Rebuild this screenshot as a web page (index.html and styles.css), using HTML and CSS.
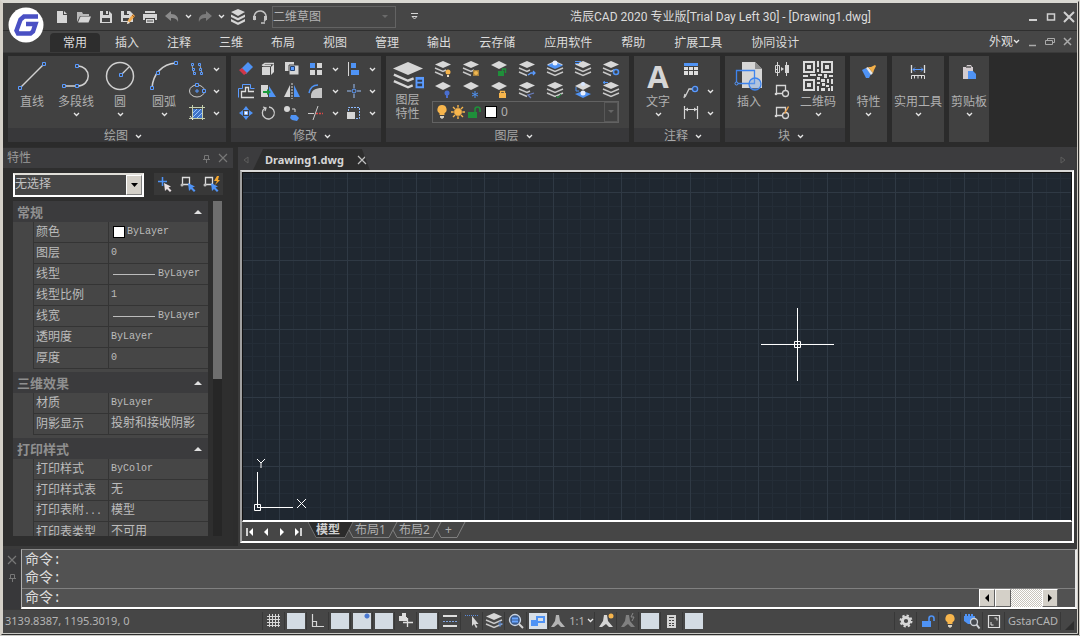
FILE: index.html
```
<!DOCTYPE html>
<html lang="zh-CN">
<head>
  <meta charset="UTF-8" />
  <title>浩辰CAD 2020 专业版</title>
  <link rel="stylesheet" href="styles.css">
</head>
<body>

<!-- icon sprite -->
<svg class="sprite" aria-hidden="true">
  <symbol id="i-chev" viewBox="0 0 7 5"><path d="M1 1l2.5 2.5L6 1" fill="none" stroke="#e6e6e6" stroke-width="1.3"/></symbol>
  <symbol id="i-new" viewBox="0 0 16 16"><path d="M3 2h6v4h4v8H3z" fill="#d6d6d6"/><path d="M10 2l3 3h-3z" fill="#d6d6d6"/></symbol>
  <symbol id="i-open" viewBox="0 0 16 16"><path d="M1 13V3h5l1 2h6v2H4z" fill="#b9b9b9"/><path d="M4.500 7.500H15L12.500 13.500H2z" fill="#d6d6d6"/></symbol>
  <symbol id="i-save" viewBox="0 0 16 16"><path d="M2 2h9l3 3v9H2z" fill="#d6d6d6"/><path d="M5 2h6v4H5zM4 9h8v4H4z" fill="#444"/><path d="M8 2h2v3H8z" fill="#d6d6d6"/></symbol>
  <symbol id="i-saveas" viewBox="0 0 16 16"><path d="M1 2h9l3 3v8H1z" fill="#d6d6d6"/><path d="M4 2h5v4H4zM3 9h6v3H3z" fill="#444"/><path d="M7 2h2v3H7z" fill="#d6d6d6"/><path d="M7 15l1-4 5-6 2 2-5 6z" fill="#f3a94a"/><path d="M7 15l1-3 2 2z" fill="#e8e8e8"/><path d="M12 6l2 2" stroke="#a35b21"/></symbol>
  <symbol id="i-print" viewBox="0 0 16 16"><path d="M3 2h10v2H3zM1 5h14v6h-2V9H3v2H1zM4 10h8v4H4z" fill="#d6d6d6"/><path d="M5 12h6" stroke="#444"/></symbol>
  <symbol id="i-undo" viewBox="0 0 16 16"><path d="M1 7l6-5v3c5 0 8 3 7 8-1-3-3-4-7-4v3z" fill="#8b8b8b"/></symbol>
  <symbol id="i-redo" viewBox="0 0 16 16"><path d="M15 7L9 2v3C4 5 1 8 2 13c1-3 3-4 7-4v3z" fill="#7b7b7b"/></symbol>
  <symbol id="i-stack" viewBox="0 0 16 16"><path d="M8 0l7 3-7 4-7-4zM1 5.500l7 3.500 7-3.500V8l-7 3.500L1 8zM1 10l7 3.500 7-3.500v2.500L8 16l-7-3.500z" fill="#d6d6d6"/></symbol>
  <symbol id="i-head" viewBox="0 0 16 16"><path d="M3 11a6 6 0 1 1 9 1.500M9 14h4" fill="none" stroke="#c4c4c4" stroke-width="1.500"/><path d="M1 7h3v4H1zM12 7h3v4h-3z" fill="#c4c4c4"/></symbol>

  <symbol id="i-line" viewBox="0 0 32 32"><path d="M4 28L28 4" stroke="#d0d0d0" stroke-width="1.500"/><path d="M2.500 26.500h3v3h-3zM26.500 2.500h3v3h-3z" fill="#414141" stroke="#5a9bff"/></symbol>
  <symbol id="i-pline" viewBox="0 0 32 32"><path d="M4 26h13c15 0 15-20 0-20" fill="none" stroke="#d0d0d0" stroke-width="1.500"/><path d="M2.500 24.500h3v3h-3zM15.500 24.500h3v3h-3zM15.500 4.500h3v3h-3z" fill="#414141" stroke="#5a9bff"/></symbol>
  <symbol id="i-circle" viewBox="0 0 32 32"><circle cx="16" cy="16" r="13.500" fill="none" stroke="#d0d0d0" stroke-width="1.500"/><path d="M17 15l8-8" stroke="#d0d0d0" stroke-width="1.300"/><path d="M15.500 13.500h3v3h-3z" fill="#414141" stroke="#5a9bff"/></symbol>
  <symbol id="i-arc" viewBox="0 0 32 32"><path d="M4 28C5 14 14 4 28 3" fill="none" stroke="#d0d0d0" stroke-width="1.500"/><path d="M2.500 26.500h3v3h-3zM8.500 11.500h3v3h-3zM26.500 1.500h3v3h-3z" fill="#414141" stroke="#5a9bff"/></symbol>
  <symbol id="i-array" viewBox="0 0 18 18"><path d="M4 5l2 9M12 5l2 9" stroke="#aaa"/><path d="M3.500 3.500h2v2h-2zM4.500 8.500h2v2h-2zM5.500 12.500h2v2h-2zM10.500 3.500h2v2h-2zM11.500 8.500h2v2h-2zM12.500 12.500h2v2h-2z" fill="#414141" stroke="#5a9bff"/></symbol>
  <symbol id="i-ellipse" viewBox="0 0 18 18"><ellipse cx="9" cy="9" rx="7.500" ry="6" fill="none" stroke="#ccc"/><path d="M9 7v4M7 9h4" stroke="#5a9bff"/><path d="M7.500 1.500h3v3h-3zM14.500 7.500h3v3h-3z" fill="#414141" stroke="#5a9bff"/></symbol>
  <symbol id="i-hatch" viewBox="0 0 18 18"><path d="M5 5h9v9H5z" fill="#3f74c8"/><path d="M5 9l4-4M5 13l8-8M9 14l5-5" stroke="#9cc3ff"/><path d="M4.500 1v15M14.500 1v15M1 3.500h16M1 14.500h16" stroke="#c5cfae"/><path d="M2 12l3 4" stroke="#eee"/></symbol>

  <symbol id="i-erase" viewBox="0 0 18 18"><path d="M11 2l5 5-7 7-5-5z" fill="#4f93f5"/><path d="M5 8l5 5-3 2-5-5z" fill="#cf3648"/></symbol>
  <symbol id="i-copy" viewBox="0 0 18 18"><path d="M3 7h8v8H3z" fill="#d6d6d6"/><path d="M3 5.500l3-2h9M4 5.500h8" fill="none" stroke="#d6d6d6" stroke-width="1.500"/><path d="M12 7l3-3v8l-3 3z" fill="#d6d6d6"/></symbol>
  <symbol id="i-overlap" viewBox="0 0 18 18"><path d="M2 2h9v9H2z" fill="#d6d6d6"/><path d="M6 5h10v10H6z" fill="#d6d6d6" stroke="#414141"/><path d="M7.500 6.500h4v4h-4z" fill="#5a9bff" stroke="#26426e"/></symbol>
  <symbol id="i-four" viewBox="0 0 18 18"><path d="M3 3h5v5H3z" fill="#4f93f5"/><path d="M10 3h5v5h-5zM3 10h5v5H3zM10 10h5v5h-5z" fill="#d6d6d6"/></symbol>
  <symbol id="i-align" viewBox="0 0 18 18"><path d="M3.500 2v14" stroke="#d6d6d6"/><path d="M6 3h5v5H6zM6 10h8v5H6z" fill="#4f93f5"/></symbol>
  <symbol id="i-offset" viewBox="0 0 18 18"><path d="M1.500 15.500v-9h4v-4h8v4h4" fill="none" stroke="#5a9bff"/><path d="M17 15.500H4.500v-6h4v-4h3v4H17" fill="none" stroke="#ddd" stroke-width="1.300"/></symbol>
  <symbol id="i-stretch" viewBox="0 0 18 18"><path d="M2 3h7v12H2z" fill="#d6d6d6"/><path d="M10 4l7 11h-7z" fill="#4f93f5"/><path d="M4 9h4V7l4 3-4 3v-2H4z" fill="#1a9a3c"/></symbol>
  <symbol id="i-mirror" viewBox="0 0 18 18"><path d="M7 3v12H1z" fill="#d6d6d6"/><path d="M11 3v12h6z" fill="#4f93f5"/><path d="M9 1v16" stroke="#ddd" stroke-dasharray="2 1"/></symbol>
  <symbol id="i-fillet" viewBox="0 0 18 18"><path d="M4 16V13c1-5 4-7 11-7v10z" fill="#c6c6c6"/><path d="M2 11c1-5 4-8 9-8" fill="none" stroke="#4f93f5" stroke-width="1.500"/></symbol>
  <symbol id="i-join" viewBox="0 0 18 18"><path d="M9 2v14M2 9h14" stroke="#9cc0f5" stroke-dasharray="4 1"/><circle cx="9" cy="9" r="2" fill="#414141" stroke="#5a9bff"/></symbol>
  <symbol id="i-move" viewBox="0 0 18 18"><path d="M9 2l3 4H6zM9 16l3-4H6zM2 9l4-3v6zM16 9l-4-3v6z" fill="#4f93f5"/><path d="M7.500 7.500h3v3h-3z" fill="#fff" stroke="#8db9ff"/></symbol>
  <symbol id="i-rotate" viewBox="0 0 18 18"><path d="M6 4a6 6 0 1 0 4-1M4 3l3 1-1 3" fill="none" stroke="#ccc" stroke-width="1.300"/></symbol>
  <symbol id="i-cprop" viewBox="0 0 18 18"><circle cx="4" cy="5" r="3" fill="#d6d6d6"/><path d="M9 5h3v3" fill="none" stroke="#d6d6d6"/><path d="M8 11h5l3 3-2 3-5-1-2-2z" fill="#4f93f5"/></symbol>
  <symbol id="i-trim" viewBox="0 0 18 18"><path d="M11 2L6 16M1 9.500h6" stroke="#ccc"/><path d="M9 9.500h7" stroke="#e04848" stroke-width="1.500" stroke-dasharray="2 1"/></symbol>
  <symbol id="i-scale" viewBox="0 0 18 18"><path d="M3.500 7V3.500h11v11H11" fill="none" stroke="#8dbbff" stroke-dasharray="2 1"/><path d="M2 8h8v7H2z" fill="#d6d6d6"/></symbol>

  <symbol id="i-layers-lg" viewBox="0 0 34 32"><path d="M17 1l16 7-16 7L1 8z" fill="#d6d6d6"/><path d="M2 14.500L17 21l6-2.500M2 21.500L17 28l5-2" fill="none" stroke="#d6d6d6" stroke-width="2.500"/><path d="M25 17h9v12h-9z" fill="#5a9bff"/><path d="M27 20h5v2h-5zM27 24h5v3h-5z" fill="#2f3b4e"/></symbol>
  <symbol id="i-lay" viewBox="0 0 18 18"><path d="M9 1l8 3.500L9 8 1 4.500z" fill="#d8d8d8"/><path d="M1 8l8 3.500L17 8M1 12l8 3.500L17 12" fill="none" stroke="#c8c8c8" stroke-width="1.400"/></symbol>
  <symbol id="i-lay1" viewBox="0 0 18 18"><path d="M9 3l8 4-8 4-8-4z" fill="#d8d8d8"/></symbol>
  <symbol id="i-lay2" viewBox="0 0 18 18"><path d="M9 1l8 3.500L9 8 1 4.500z" fill="#d8d8d8"/><path d="M1 8l8 3.500L12 10M1 12l8 3.500" fill="none" stroke="#c8c8c8" stroke-width="1.400"/></symbol>

  <symbol id="i-bulb" viewBox="0 0 16 16"><path d="M8 1a4.500 4.500 0 0 1 2.500 8.300V11h-5V9.300A4.500 4.500 0 0 1 8 1z" fill="#f7b54c"/><path d="M6 12h4v1.500L8 15l-2-1.500z" fill="#d9d2c4"/></symbol>
  <symbol id="i-sun" viewBox="0 0 16 16"><path d="M8 1v14M1 8h14M3 3l10 10M13 3L3 13" stroke="#f7b54c" stroke-width="1.400"/><circle cx="8" cy="8" r="4.200" fill="#f7b54c" stroke="#414141" stroke-width=".6"/></symbol>
  <symbol id="i-unlock" viewBox="0 0 16 16"><path d="M2 8h9v6H2z" fill="currentColor"/><path d="M9 8V5.500a2.500 2.500 0 0 1 5 0V8" fill="none" stroke="currentColor" stroke-width="1.600"/></symbol>

  <symbol id="i-table" viewBox="0 0 18 18"><path d="M2 3h14v3H2z" fill="#4f93f5"/><path d="M2 7h4v3H2zM7 7h4v3H7zM12 7h4v3h-4zM2 11h4v4H2zM7 11h4v4H7zM12 11h4v4h-4z" fill="#dedede"/></symbol>
  <symbol id="i-leader" viewBox="0 0 18 18"><path d="M3 15L7 7h4M2 16l1-4" fill="none" stroke="#ccc" stroke-width="1.300"/><circle cx="13" cy="7" r="2.600" fill="#2e4a78" stroke="#5a9bff" stroke-width="1.300"/></symbol>
  <symbol id="i-dim" viewBox="0 0 18 18"><path d="M2.500 2v13M15.500 2v13M2 5.500h13" fill="none" stroke="#d6d6d6" stroke-width="1.200"/><path d="M3 5.500l3-2v4zM15 5.500l-3-2v4z" fill="#d6d6d6"/></symbol>
  <symbol id="i-insert" viewBox="0 0 32 32"><path d="M9 2h13l7 7v19H9z" fill="#d6d6d6"/><path d="M22 2v7h7z" fill="#8f8f8f"/><path d="M3.500 10.500h18v13h-18z" fill="none" stroke="#3e84ee" stroke-width="1.300"/><circle cx="22" cy="24" r="6" fill="#79a8e8" fill-opacity=".4" stroke="#3e84ee" stroke-width="1.300"/><circle cx="3.500" cy="23.500" r="1.500" fill="#414141" stroke="#5a9bff"/></symbol>
  <symbol id="i-edit" viewBox="0 0 18 18"><path d="M2 9.500h3M13 9.500h3M4.500 2v14M13.500 2v14" stroke="#d6d6d6"/><path d="M2.500 5.500h4v7h-4z" fill="none" stroke="#d6d6d6"/><path d="M12 5h4v8h-4z" fill="#d6d6d6"/><path d="M8 7l3 2-3 2z" fill="#d6d6d6"/></symbol>
  <symbol id="i-blk" viewBox="0 0 18 18"><path d="M3.500 3.500h9v8h-9z" fill="none" stroke="#d6d6d6" stroke-width="1.300"/><circle cx="12.500" cy="11.500" r="3" fill="#414141" stroke="#d6d6d6" stroke-width="1.300"/><circle cx="3" cy="12" r="1.300" fill="#d6d6d6"/></symbol>
  <symbol id="i-qr" viewBox="0 0 30 30"><path d="M1 1h10v10H1zM19 1h10v10H19zM1 19h10v10H1z" fill="none" stroke="#dcdcdc" stroke-width="2"/><path d="M4 4h4v4H4zM22 4h4v4h-4zM4 22h4v4H4zM14 0h2v6h-2zM14 8h2v3h-2zM0 14h5v2H0zM7 13h6v2H7zM15 13h4v2h-4zM14 16h3v3h-3zM21 13h3v4h-3zM26 14h4v2h-4zM18 18h4v3h-4zM24 18h2v4h-2zM28 18h2v5h-2zM14 21h3v2h-3zM19 22h3v3h-3zM14 25h2v5h-2zM23 24h3v2h-3zM18 27h4v3h-4zM25 27h2v3h-2zM28 25h2v5h-2z" fill="#dcdcdc"/></symbol>
  <symbol id="i-brush" viewBox="0 0 18 18"><path d="M2 7l4-2 5 6-2 4H6z" fill="#4f93f5"/><path d="M6 5l2-1 5 6-2 2z" fill="#e8e8e8"/><path d="M8 4h3l4-2 1 1-2 4-1 3z" fill="#f3b04a"/></symbol>
  <symbol id="i-util" viewBox="0 0 18 18"><path d="M2.500 2v8M15.500 2v8" stroke="#dedede" stroke-width="1.300"/><path d="M4 6.500h10M6 4.500l-2 2 2 2M12 4.500l2 2-2 2" fill="none" stroke="#5a9bff"/><path d="M2.500 16v-3.500h13V16M5.500 13v2.500M9 13v2.500M12.500 13v2.500" fill="none" stroke="#dedede"/></symbol>
  <symbol id="i-clip" viewBox="0 0 18 18"><path d="M3 4h3l1-2h4l1 2h1v12H3z" fill="#d3ccd0"/><path d="M6 4h5" stroke="#555" stroke-width="1.500"/><path d="M8 8h5l3 3v5H8z" fill="#4f93f5"/></symbol>

  <symbol id="i-pin" viewBox="0 0 9 9"><path d="M2.500 1.500h4v4h-4zM1 5.500h7M4.500 6v3" fill="none" stroke="#777"/></symbol>
  <symbol id="i-x" viewBox="0 0 10 10"><path d="M1 1l8 8M9 1L1 9" stroke="currentColor" stroke-width="1.200"/></symbol>
  <symbol id="i-selplus" viewBox="0 0 18 18"><path d="M5.500 2v9M1 6.500h9" stroke="#4f93f5" stroke-width="1.500"/><path d="M7 8l1 8 2-2 3 3 1.500-1.500-3-3 2.500-1z" fill="#e8dfe2"/></symbol>
  <symbol id="i-selobj" viewBox="0 0 18 18"><path d="M2.500 2.500h7v7h-7z" fill="none" stroke="#ddd" stroke-width="1.300"/><circle cx="2" cy="10" r="1.500" fill="#bbb"/><path d="M8 8l1 8 2-2 3 3 1.500-1.500-3-3 2.500-1z" fill="#4f93f5"/></symbol>
  <symbol id="i-flash" viewBox="0 0 18 18"><path d="M14 1l-3 5h3l-2 4 5-5h-2l1-4z" fill="#f5a62c"/></symbol>

  <symbol id="i-grid" viewBox="0 0 18 18"><path d="M4.500 2v13M7.500 2v13M10.500 2v13M13.500 2v13M2 4.500h13M2 7.500h13M2 10.500h13M2 13.500h13" stroke="#d6d6d6"/></symbol>
  <symbol id="i-ortho" viewBox="0 0 18 18"><path d="M3.500 2v12.500H15M3.500 9.500h4v5" fill="none" stroke="#d6d6d6" stroke-width="1.200"/></symbol>
  <symbol id="i-plus" viewBox="0 0 18 18"><path d="M2 4h3V1h4v4h1v4H2z" fill="#dedede"/><path d="M10.500 6v9M6 10.500h10" stroke="#dedede" stroke-width="1.300"/></symbol>
  <symbol id="i-lines" viewBox="0 0 18 18"><path d="M2 4h14M2 14h14" stroke="#dedede" stroke-width="2"/><path d="M2 9.500h14" stroke="#7fa3dd" stroke-dasharray="2 1"/></symbol>
  <symbol id="i-dyn" viewBox="0 0 18 18"><path d="M2 3.500h13" stroke="#5a8bdd" stroke-dasharray="1 1"/><path d="M9 4v10l2-2 2 4 1.500-1-2-3h3z" fill="#d6d6d6"/></symbol>
  <symbol id="i-find" viewBox="0 0 18 18"><circle cx="8" cy="8" r="5.500" fill="#3b5c8f" stroke="#cdd6e2" stroke-width="1.300"/><path d="M5 6.500h6M5 9.500h6" stroke="#6aa5ff" stroke-width="2"/><path d="M12 12l4 4" stroke="#d6d6d6" stroke-width="2"/></symbol>
  <symbol id="i-wins" viewBox="0 0 18 16"><path d="M0 0h18v16H0z" fill="#d7dfe8"/><path d="M7 3h9v7H7z" fill="#4f93f5"/><path d="M9 5h5v3H9z" fill="#d7dfe8"/><path d="M2 7h7v6H2z" fill="#4f93f5"/></symbol>
  <symbol id="i-anno" viewBox="0 0 18 18"><path d="M7 3h3l1 6 5 6h-4l-3-3-4 3H2l4-6z" fill="currentColor"/></symbol>
  <symbol id="i-doc" viewBox="0 0 18 18"><path d="M4 3h9v13H4z" fill="#d6d6d6"/><path d="M6 5.500h5M6 8.500h2M9 8.500h2M6 11.500h2M9 11.500h2M6 13.500h2M9 13.500h2" stroke="#444"/></symbol>
  <symbol id="i-gear" viewBox="0 0 18 18"><circle cx="9" cy="9" r="3.600" fill="none" stroke="#d6d6d6" stroke-width="3"/><circle cx="9" cy="9" r="5.500" fill="none" stroke="#d6d6d6" stroke-width="2" stroke-dasharray="2.300 2"/></symbol>
  <symbol id="i-iso" viewBox="0 0 18 18"><path d="M1 4h1V2h2v2h1V2h2v2h1V2h2v2h2v8H5l-4-3z" fill="#4f93f5"/><circle cx="11" cy="10" r="3.500" fill="#45494f" stroke="#cfd3d8" stroke-width="1.300"/><path d="M13.500 12.500l3 4" stroke="#cfd3d8" stroke-width="2"/></symbol>
  <symbol id="i-full" viewBox="0 0 18 18"><path d="M3.500 3.500h11v12h-11z" fill="none" stroke="#dedede" stroke-width="1.200"/><path d="M9.500 6H12v2.500M6 10v3h2.500" fill="none" stroke="#dedede"/></symbol>
</svg>

<div class="window">

  <header class="head">
    <svg class="logo" viewBox="0 0 36 36" role="img" aria-label="浩辰CAD">
      <circle cx="18" cy="18" r="17.500" fill="#fff"/>
      <path d="M30 9.500H16l-3.500 3-4 11 1.500 3h12.500l2.500-2 2.500-7.500H18" fill="none" stroke="#4a50c4" stroke-width="4.500"/>
    </svg>

    <div class="titlebar">
      <div class="quick">
        <button title="新建"><svg class="s16"><use href="#i-new"/></svg></button>
        <button title="打开"><svg class="s16"><use href="#i-open"/></svg></button>
        <button title="保存"><svg class="s16"><use href="#i-save"/></svg></button>
        <button title="另存为"><svg class="s16"><use href="#i-saveas"/></svg></button>
        <button title="打印"><svg class="s16"><use href="#i-print"/></svg></button>
        <button title="放弃"><svg class="s16"><use href="#i-undo"/></svg></button>
        <button class="drop" title="放弃列表"><svg class="chev"><use href="#i-chev"/></svg></button>
        <button title="重做"><svg class="s16"><use href="#i-redo"/></svg></button>
        <button class="drop" title="重做列表"><svg class="chev"><use href="#i-chev"/></svg></button>
        <button title="图层"><svg class="s16"><use href="#i-stack"/></svg></button>
        <button title="客服"><svg class="s16"><use href="#i-head"/></svg></button>
      </div>
      <div class="workspace">
        <select aria-label="工作空间"><option>二维草图</option></select>
        <svg class="tri" viewBox="0 0 7 4"><path d="M0 0h6L3 3z" fill="#6a6a6a"/></svg>
      </div>
      <button class="overflow" title="自定义"><svg viewBox="0 0 7 7"><path d="M0 .5h7M1 3.500h5L3.500 6z" fill="none" stroke="#d6d6d6"/></svg></button>
      <h1 class="title">浩辰CAD 2020 专业版[Trial Day Left 30] - [Drawing1.dwg]</h1>
      <div class="winctl">
        <button title="最小化"><svg viewBox="0 0 12 12"><path d="M2 9h8" stroke="#d0d0d0" stroke-width="2"/></svg></button>
        <button title="最大化"><svg viewBox="0 0 12 12"><path d="M2.500 3h7v6h-7z" fill="none" stroke="#d0d0d0" stroke-width="1.500"/></svg></button>
        <button title="关闭"><svg viewBox="0 0 12 12"><path d="M1 1l10 10M11 1L1 11" stroke="#d0d0d0" stroke-width="2"/></svg></button>
      </div>
    </div>

    <nav class="tabs">
      <button class="tab active"><span>常用</span></button>
      <button class="tab">插入</button>
      <button class="tab">注释</button>
      <button class="tab">三维</button>
      <button class="tab">布局</button>
      <button class="tab">视图</button>
      <button class="tab">管理</button>
      <button class="tab">输出</button>
      <button class="tab wide">云存储</button>
      <button class="tab wide">应用软件</button>
      <button class="tab wide">帮助</button>
      <button class="tab wide">扩展工具</button>
      <button class="tab wide">协同设计</button>
      <div class="docctl">
        <button class="look">外观<svg class="chev"><use href="#i-chev"/></svg></button>
        <button title="最小化"><svg viewBox="0 0 12 12"><path d="M3 9.500h7" stroke="#aaa" stroke-width="1.500"/></svg></button>
        <button title="还原"><svg viewBox="0 0 12 12"><path d="M1.500 4.500h7v4h-7zM3.500 4V2.500h7v4H9" fill="none" stroke="#aaa"/></svg></button>
        <button title="关闭"><svg viewBox="0 0 12 12"><path d="M2 2l7 7M9 2L2 9" stroke="#aaa" stroke-width="1.500"/></svg></button>
      </div>
    </nav>
  </header>

  <div class="ribbon">
    <section class="panel">
      <div class="panel-body p-draw">
        <button class="big"><svg><use href="#i-line"/></svg><span>直线</span></button>
        <button class="big"><svg><use href="#i-pline"/></svg><span>多段线</span><svg class="chev"><use href="#i-chev"/></svg></button>
        <button class="big"><svg><use href="#i-circle"/></svg><span>圆</span><svg class="chev"><use href="#i-chev"/></svg></button>
        <button class="big"><svg><use href="#i-arc"/></svg><span>圆弧</span><svg class="chev"><use href="#i-chev"/></svg></button>
        <div class="small-grid cols-draw">
          <button title="点"><svg class="s18"><use href="#i-array"/></svg></button>
          <button title="更多"><svg class="chev"><use href="#i-chev"/></svg></button>
          <button title="椭圆"><svg class="s18"><use href="#i-ellipse"/></svg></button>
          <button title="更多"><svg class="chev"><use href="#i-chev"/></svg></button>
          <button title="填充"><svg class="s18"><use href="#i-hatch"/></svg></button>
          <button title="更多"><svg class="chev"><use href="#i-chev"/></svg></button>
        </div>
      </div>
      <button class="panel-foot">绘图<svg class="chev"><use href="#i-chev"/></svg></button>
    </section>

    <section class="panel">
      <div class="panel-body p-modify">
        <div class="small-grid cols-modify">
          <button title="删除"><svg class="s18"><use href="#i-erase"/></svg></button>
          <button title="复制"><svg class="s18"><use href="#i-copy"/></svg></button>
          <button title="重叠"><svg class="s18"><use href="#i-overlap"/></svg></button>
          <button title="阵列"><svg class="s18"><use href="#i-four"/></svg></button>
          <button title="更多"><svg class="chev"><use href="#i-chev"/></svg></button>
          <button title="对齐"><svg class="s18"><use href="#i-align"/></svg></button>
          <button title="更多"><svg class="chev"><use href="#i-chev"/></svg></button>
          <button title="偏移"><svg class="s18"><use href="#i-offset"/></svg></button>
          <button title="拉伸"><svg class="s18"><use href="#i-stretch"/></svg></button>
          <button title="镜像"><svg class="s18"><use href="#i-mirror"/></svg></button>
          <button title="圆角"><svg class="s18"><use href="#i-fillet"/></svg></button>
          <button title="更多"><svg class="chev"><use href="#i-chev"/></svg></button>
          <button title="打断"><svg class="s18"><use href="#i-join"/></svg></button>
          <button title="更多"><svg class="chev"><use href="#i-chev"/></svg></button>
          <button title="移动"><svg class="s18"><use href="#i-move"/></svg></button>
          <button title="旋转"><svg class="s18"><use href="#i-rotate"/></svg></button>
          <button title="匹配"><svg class="s18"><use href="#i-cprop"/></svg></button>
          <button title="修剪"><svg class="s18"><use href="#i-trim"/></svg></button>
          <button title="更多"><svg class="chev"><use href="#i-chev"/></svg></button>
          <button title="缩放"><svg class="s18"><use href="#i-scale"/></svg></button>
          <button title="更多"><svg class="chev"><use href="#i-chev"/></svg></button>
        </div>
      </div>
      <button class="panel-foot">修改<svg class="chev"><use href="#i-chev"/></svg></button>
    </section>

    <section class="panel">
      <div class="panel-body p-layer">
        <button class="big two"><svg><use href="#i-layers-lg"/></svg><span>图层<br>特性</span></button>
        <div class="layer-side">
          <div class="small-grid cols-layer">
            <button title="关闭图层"><svg class="s18" viewBox="0 0 18 18"><use href="#i-lay2"/><circle cx="14" cy="12" r="2.500" fill="#f7b54c"/><path d="M13 15h2v2h-2z" fill="#e8dcc8"/></svg></button>
            <button title="冻结图层"><svg class="s18" viewBox="0 0 18 18"><use href="#i-lay2"/><path d="M11 10h6v6h-6z" fill="#a5803c"/><circle cx="14" cy="13" r="2" fill="#f0b751"/></svg></button>
            <button title="解锁图层"><svg class="s18" viewBox="0 0 18 18"><use href="#i-lay1" y="-2"/><path d="M8 11h6v5H8z" fill="#1f8f3a"/><path d="M12.500 11V9h3v4" fill="none" stroke="#1f8f3a" stroke-width="1.500"/></svg></button>
            <button title="置为当前"><svg class="s18" viewBox="0 0 18 18"><use href="#i-lay2"/><path d="M10 15l3-2h4M15 11l2 2-2 2" fill="none" stroke="#5a9bff" stroke-width="1.300"/></svg></button>
            <button title="隔离"><svg class="s18" viewBox="0 0 18 18"><use href="#i-lay"/><path d="M9 2l8 3.500L9 9 1 5.500z" fill="#4f93f5"/><circle cx="9" cy="3" r="2.500" fill="#e8f0ff"/></svg></button>
            <button title="上一个"><svg class="s18" viewBox="0 0 18 18"><use href="#i-lay"/><path d="M1 1.500h6M1 3.500h4" stroke="#4f93f5"/></svg></button>
            <button title="图层状态"><svg class="s18" viewBox="0 0 18 18"><use href="#i-lay2"/><circle cx="14" cy="12" r="2.500" fill="none" stroke="#4f93f5" stroke-width="1.600"/></svg></button>
            <button title="打开全部"><svg class="s18" viewBox="0 0 18 18"><use href="#i-lay1" y="-2"/><circle cx="13" cy="12" r="2.500" fill="#4a6fd0"/><path d="M12 14h2v3h-2z" fill="#4a6fd0"/></svg></button>
            <button title="解冻全部"><svg class="s18" viewBox="0 0 18 18"><use href="#i-lay1" y="-2"/><path d="M13 10v7M10 12l6 3M16 12l-6 3" stroke="#4f93f5"/></svg></button>
            <button title="锁定图层"><svg class="s18" viewBox="0 0 18 18"><use href="#i-lay1" y="-2"/><path d="M9 12h7v5H9z" fill="#f7b54c"/><path d="M10.500 12v-1.500h4V12" fill="none" stroke="#f7b54c" stroke-width="1.300"/></svg></button>
            <button title="漫游"><svg class="s18" viewBox="0 0 18 18"><use href="#i-lay2"/><path d="M16 12l-6 2 3 3" fill="none" stroke="#6b7fc0" stroke-width="1.300"/></svg></button>
            <button title="匹配图层"><svg class="s18" viewBox="0 0 18 18"><use href="#i-lay"/><path d="M10 15l2 2 3-4" fill="none" stroke="#1f8f3a"/></svg></button>
            <button title="合并图层"><svg class="s18" viewBox="0 0 18 18"><use href="#i-lay1" y="-2"/><path d="M9 10l8 3-8 4-8-4z" fill="#4f93f5"/><circle cx="9" cy="3" r="2" fill="#d6e6ff"/><circle cx="9" cy="12" r="2.500" fill="#e8f0ff"/><path d="M2 6v4h3" fill="none" stroke="#4f93f5"/></svg></button>
            <button title="删除图层"><svg class="s18" viewBox="0 0 18 18"><use href="#i-lay"/><path d="M1 1.500h5M3 0L1 1.500 3 3" fill="none" stroke="#4f93f5"/></svg></button>
          </div>
          <div class="layer-combo">
            <svg class="s16"><use href="#i-bulb"/></svg>
            <svg class="s16"><use href="#i-sun"/></svg>
            <svg class="s16 green"><use href="#i-unlock"/></svg>
            <i class="swatch"></i>
            <select aria-label="当前图层"><option>0</option></select>
            <span class="combo-btn"><svg class="tri" viewBox="0 0 7 4"><path d="M0 0h6L3 3z" fill="#666"/></svg></span>
          </div>
        </div>
      </div>
      <button class="panel-foot">图层<svg class="chev"><use href="#i-chev"/></svg></button>
    </section>

    <section class="panel">
      <div class="panel-body p-anno">
        <button class="big"><b class="letter">A</b><span>文字</span><svg class="chev"><use href="#i-chev"/></svg></button>
        <div class="small-grid cols-anno">
          <button title="表格"><svg class="s18"><use href="#i-table"/></svg></button>
          <i></i>
          <button title="引线"><svg class="s18"><use href="#i-leader"/></svg></button>
          <button title="更多"><svg class="chev"><use href="#i-chev"/></svg></button>
          <button title="标注"><svg class="s18"><use href="#i-dim"/></svg></button>
          <button title="更多"><svg class="chev"><use href="#i-chev"/></svg></button>
        </div>
      </div>
      <button class="panel-foot">注释<svg class="chev"><use href="#i-chev"/></svg></button>
    </section>

    <section class="panel">
      <div class="panel-body p-block">
        <button class="big"><svg><use href="#i-insert"/></svg><span>插入</span></button>
        <div class="small-grid cols-block">
          <button title="编辑块"><svg class="s18"><use href="#i-edit"/></svg></button>
          <button title="创建块"><svg class="s18"><use href="#i-blk"/></svg></button>
          <button title="编辑属性"><svg class="s18" viewBox="0 0 18 18"><use href="#i-blk"/><path d="M11 9l4-7 1 1-4 7z" fill="#f0a24a"/></svg></button>
        </div>
        <button class="big"><svg class="qr"><use href="#i-qr"/></svg><span>二维码</span><svg class="chev"><use href="#i-chev"/></svg></button>
      </div>
      <button class="panel-foot">块<svg class="chev"><use href="#i-chev"/></svg></button>
    </section>

    <button class="mini m-prop"><svg class="s18"><use href="#i-brush"/></svg><span>特性</span><svg class="chev"><use href="#i-chev"/></svg></button>
    <button class="mini m-util"><svg class="s18"><use href="#i-util"/></svg><span>实用工具</span><svg class="chev"><use href="#i-chev"/></svg></button>
    <button class="mini m-clip"><svg class="s18"><use href="#i-clip"/></svg><span>剪贴板</span><svg class="chev"><use href="#i-chev"/></svg></button>
  </div>

  <main class="work">
    <aside class="palette">
      <div class="palette-head">
        <h2>特性</h2>
        <button title="固定"><svg class="pin"><use href="#i-pin"/></svg></button>
        <button title="关闭"><svg class="x"><use href="#i-x"/></svg></button>
      </div>
      <div class="palette-tools">
        <div class="pick">
          <select aria-label="选择对象"><option>无选择</option></select>
          <span class="pick-btn"><svg viewBox="0 0 7 4"><path d="M0 0h7L3.500 4z" fill="#000"/></svg></span>
        </div>
        <div class="picks">
          <button title="切换选择"><svg class="s18"><use href="#i-selplus"/></svg></button>
          <button title="选择对象"><svg class="s18"><use href="#i-selobj"/></svg></button>
          <button title="快速选择"><svg class="s18" viewBox="0 0 18 18"><use href="#i-selobj"/><use href="#i-flash"/></svg></button>
        </div>
      </div>
      <div class="props">
        <div class="props-list">
          <section>
            <button class="group">常规<svg viewBox="0 0 8 4"><path d="M0 4l4-4 4 4z" fill="#e0e0e0"/></svg></button>
            <table>
              <tr><td></td><th>颜色</th><td><span class="val"><i class="swatch"></i>ByLayer</span></td></tr>
              <tr><td></td><th>图层</th><td>0</td></tr>
              <tr><td></td><th>线型</th><td><span class="val"><i class="rule"></i>ByLayer</span></td></tr>
              <tr><td></td><th>线型比例</th><td>1</td></tr>
              <tr><td></td><th>线宽</th><td><span class="val"><i class="rule"></i>ByLayer</span></td></tr>
              <tr><td></td><th>透明度</th><td>ByLayer</td></tr>
              <tr><td></td><th>厚度</th><td>0</td></tr>
            </table>
          </section>
          <section>
            <button class="group">三维效果<svg viewBox="0 0 8 4"><path d="M0 4l4-4 4 4z" fill="#e0e0e0"/></svg></button>
            <table>
              <tr><td></td><th>材质</th><td>ByLayer</td></tr>
              <tr><td></td><th>阴影显示</th><td class="cn">投射和接收阴影</td></tr>
            </table>
          </section>
          <section>
            <button class="group">打印样式<svg viewBox="0 0 8 4"><path d="M0 4l4-4 4 4z" fill="#e0e0e0"/></svg></button>
            <table>
              <tr><td></td><th>打印样式</th><td>ByColor</td></tr>
              <tr><td></td><th>打印样式表</th><td class="cn">无</td></tr>
              <tr><td></td><th>打印表附<span class="dots">...</span></th><td class="cn">模型</td></tr>
              <tr><td></td><th>打印表类型</th><td class="cn">不可用</td></tr>
            </table>
          </section>
        </div>
        <div class="props-scroll"><i></i></div>
      </div>
    </aside>

    <section class="doc">
      <div class="doc-tabs">
        <button class="nav" title="向左"><svg viewBox="0 0 6 8"><path d="M5 1L1 4l4 3z" fill="none" stroke="#5c5c5c"/></svg></button>
        <div class="doc-tab">
          <a href="#model">Drawing1.dwg</a>
          <button title="关闭图纸"><svg class="x"><use href="#i-x"/></svg></button>
        </div>
        <button class="nav right" title="向右"><svg viewBox="0 0 6 8"><path d="M1 1l4 3-4 3z" fill="none" stroke="#5c5c5c"/></svg></button>
      </div>
      <div class="view">
        <div class="canvas" id="model">
          <svg class="gridlines">
            <defs>
              <pattern id="grid" x="36" y="19" width="137" height="137" patternUnits="userSpaceOnUse">
                <path d="M14.500 0v137M27.500 0v137M41.500 0v137M55.500 0v137M82.500 0v137M96.500 0v137M110.500 0v137M123.500 0v137M0 14.500h137M0 27.500h137M0 41.500h137M0 55.500h137M0 82.500h137M0 96.500h137M0 110.500h137M0 123.500h137" stroke="#242d37"/>
                <path d="M.5 0v137M68.500 0v137M0 .5h137M0 68.500h137" stroke="#2f3944"/>
              </pattern>
            </defs>
            <rect width="100%" height="100%" fill="url(#grid)"/>
          </svg>
          <svg class="ucs" viewBox="0 0 60 56">
            <path d="M4.500 14v36M4 49.500h36" stroke="#fff"/>
            <path d="M1.500 46.500h6v6h-6z" fill="none" stroke="#fff"/>
            <path d="M4 1l4 4 4-4M8 5v5M44 41l9 9M53 41l-9 9" fill="none" stroke="#fff"/>
          </svg>
          <svg class="cross" viewBox="0 0 73 73">
            <path d="M36.500 0v73M0 36.500h73" stroke="#fff"/>
            <path d="M33.500 33.500h6v6h-6z" fill="none" stroke="#fff"/>
          </svg>
        </div>
        <div class="layouts">
          <button class="step" title="第一个"><svg viewBox="0 0 8 8"><path d="M1 0v8" stroke="#fff" stroke-width="1.500"/><path d="M7 0v8L3 4z" fill="#fff"/></svg></button>
          <button class="step" title="上一个"><svg viewBox="0 0 8 8"><path d="M6 0v8L2 4z" fill="#fff"/></svg></button>
          <button class="step" title="下一个"><svg viewBox="0 0 8 8"><path d="M2 0v8l4-4z" fill="#fff"/></svg></button>
          <button class="step" title="最后一个"><svg viewBox="0 0 8 8"><path d="M7 0v8" stroke="#fff" stroke-width="1.500"/><path d="M1 0v8l4-4z" fill="#fff"/></svg></button>
          <button class="layout on"><svg viewBox="0 0 46 16"><path d="M0 0l8 15.500h29L45 0" fill="#2b2b2b" stroke="#6e6e6e"/></svg><span>模型</span></button>
          <button class="layout"><svg viewBox="0 0 49 16"><path d="M0 8l4 7.500h36L48 0" fill="none" stroke="#808080"/></svg><span>布局1</span></button>
          <button class="layout"><svg viewBox="0 0 49 16"><path d="M0 8l4 7.500h36L48 0" fill="none" stroke="#808080"/></svg><span>布局2</span></button>
          <button class="layout add"><svg viewBox="0 0 29 16"><path d="M0 8l4 7.500h16L28 0" fill="none" stroke="#808080"/></svg><span>+</span></button>
        </div>
      </div>
    </section>
  </main>

  <section class="command">
    <div class="command-side">
      <button title="关闭"><svg class="x"><use href="#i-x"/></svg></button>
      <button title="固定"><svg class="pin"><use href="#i-pin"/></svg></button>
    </div>
    <div class="command-box">
      <div class="log">
        <p>命令:</p>
        <p>命令:</p>
      </div>
      <div class="entry">
        <label for="cmd">命令:</label>
        <input id="cmd" type="text" autocomplete="off">
        <div class="hscroll">
          <button title="向左滚动"><svg viewBox="0 0 4 8"><path d="M4 0v8L0 4z"/></svg></button>
          <i class="thumb"></i>
          <i class="track"></i>
          <button title="向右滚动"><svg viewBox="0 0 4 8"><path d="M0 0v8l4-4z"/></svg></button>
        </div>
      </div>
    </div>
  </section>

  <footer class="status">
    <span class="coords">3139.8387, 1195.3019, 0</span>
    <div class="cells">
      <button title="栅格"><svg class="s18"><use href="#i-grid"/></svg></button>
      <button title="捕捉"><i class="on"></i></button>
      <button title="正交"><svg class="s18"><use href="#i-ortho"/></svg></button>
      <button title="极轴"><i class="on"></i></button>
      <button title="对象捕捉"><i class="on dot"></i></button>
      <button title="三维捕捉"><i class="on"></i></button>
      <button title="动态输入"><svg class="s18"><use href="#i-plus"/></svg></button>
      <button title="追踪"><i class="on"></i></button>
      <button title="线宽"><svg class="s18"><use href="#i-lines"/></svg></button>
      <button title="选择循环"><svg class="s18"><use href="#i-dyn"/></svg></button>
      <button title="图层"><svg class="s18" viewBox="0 0 18 18"><use href="#i-lay"/><path d="M15 9v6M13 12h5" stroke="#4f7fc8"/></svg></button>
      <button title="查找"><svg class="s18"><use href="#i-find"/></svg></button>
      <button title="窗口"><svg class="wins"><use href="#i-wins"/></svg></button>
      <button class="scale"><svg class="s18"><use href="#i-anno"/></svg>1:1<svg class="chev"><use href="#i-chev"/></svg></button>
      <button title="注释可见性"><svg class="s18" viewBox="0 0 18 18"><use href="#i-anno"/><circle cx="14" cy="4" r="2.500" fill="#f7b54c"/></svg></button>
      <button class="dim" title="自动缩放"><svg class="s18" viewBox="0 0 18 18"><use href="#i-anno"/><path d="M14 1l-2 4h3l-2 4" fill="none" stroke="#888"/></svg></button>
      <button title="模型"><i class="on"></i></button>
      <button title="快捷特性"><svg class="s18"><use href="#i-doc"/></svg></button>
      <button title="单位"><i class="on"></i></button>
    </div>
    <div class="cells end">
      <button title="设置"><svg class="s18"><use href="#i-gear"/></svg></button>
      <button class="blue" title="锁定"><svg class="s16"><use href="#i-unlock"/></svg></button>
      <button title="提示"><svg class="s16"><use href="#i-bulb"/></svg></button>
      <button title="隔离对象"><svg class="s18"><use href="#i-iso"/></svg></button>
      <button title="全屏"><svg class="s18"><use href="#i-full"/></svg></button>
      <span class="brand">GstarCAD</span>
    </div>
    <svg class="grip" viewBox="0 0 10 10"><path d="M9 0v9H0z" fill="#2e2e2e"/></svg>
  </footer>
</div>

</body>
</html>
```
FILE: styles.css
```
* { box-sizing: border-box; }
body {
  margin: 0;
  font-family: "Noto Sans", "Noto Sans CJK SC", sans-serif;
  font-size: 12px;
  line-height: 14px;
  color: #dcdcdc;
  background: #2d2d2d;
}
button, select, input {
  font: inherit;
  color: inherit;
  background: none;
  border: 0;
  padding: 0;
  margin: 0;
}
button { display: flex; align-items: center; justify-content: center; white-space: nowrap; }
select { appearance: none; outline: none; }
h1, h2, p { margin: 0; font-size: 12px; font-weight: normal; }
svg { display: block; flex: none; }
.sprite { position: absolute; width: 0; height: 0; }
.s16 { width: 16px; height: 16px; }
.s18 { width: 18px; height: 18px; }
.chev { width: 7px; height: 5px; }
.tri { width: 7px; height: 4px; }
.x { width: 10px; height: 10px; }
.pin { width: 9px; height: 9px; }
.green { color: #1f8f3a; }

.window {
  height: 100vh;
  display: flex;
  flex-direction: column;
  border: 3px solid #d4d0c8;
  border-top-color: #d9d8d2;
  border-right: 3px double #d4d0c8;
  border-bottom: 3px double #c8c8c4;
  background: #2d2d2d;
  overflow: hidden;
}

/* title + tabs */
.head { position: relative; }
.logo { position: absolute; left: 5px; top: 4px; width: 36px; height: 36px; }
.titlebar {
  display: flex;
  align-items: center;
  height: 28px;
  padding-left: 48px;
  background: #464646;
  border-bottom: 1px solid #2f2f2f;
}
.quick { display: flex; }
.quick button { width: 22px; height: 22px; }
.quick .drop { width: 11px; }
.workspace {
  display: flex;
  align-items: center;
  width: 124px;
  height: 22px;
  margin-left: 1px;
  padding-right: 6px;
  border: 1px solid #636363;
}
.workspace select { flex: 1; color: #b4b4b4; }
.overflow { width: 36px; height: 22px; }
.overflow svg { width: 7px; height: 7px; }
.title { flex: 1; padding-right: 18px; text-align: center; font-family: Roboto, "Noto Sans CJK SC", sans-serif; }
.winctl { display: flex; gap: 6px; padding-right: 2px; }
.winctl svg { width: 12px; height: 12px; }
.tabs {
  display: flex;
  height: 22px;
  padding-left: 46px;
  background: #464646;
  border-bottom: 1px solid #3a3a3a;
}
.tab { padding: 2px 14px 0; }
.tab.wide { padding-right: 15px; }
.tab.active {
  margin: 2px 1px 0;
  padding: 0 13px;
  background: #2d2d2d;
  border-radius: 4px 4px 0 0;
}
.docctl { display: flex; align-items: center; gap: 6px; margin-left: auto; padding-right: 3px; }
.docctl svg { width: 12px; height: 12px; }
.docctl .chev { width: 7px; height: 5px; }

/* ribbon */
.ribbon {
  display: flex;
  gap: 5px;
  padding: 3px 5px 5px;
  background: #2b2b2b;
  color: #b0b0b0;
}
.panel { display: flex; flex-direction: column; background: #414141; }
.panel-body { display: flex; height: 72px; }
.panel-foot { height: 14px; gap: 7px; padding: 2px 0 0 12px; background: #38383a; color: #a8a8a8; }
.big { flex-direction: column; justify-content: flex-start; width: 44px; padding-top: 4px; }
.big > svg:first-child { width: 32px; height: 32px; }
.big > .qr:first-child { width: 30px; height: 30px; margin: 1px 0; }
.big span { margin: 3px 0; }
.big.two { width: 43px; }
.big.two span { margin: 1px 0 0; }
.letter {
  height: 32px;
  font: bold 31px/32px "Open Sans", sans-serif;
  color: #d6d6d6;
}
.small-grid {
  display: grid;
  grid-auto-rows: 22px;
  align-content: start;
  padding-top: 2px;
}
.p-draw { padding: 0 2px; }
.cols-draw { grid-template-columns: 22px 16px; }
.p-modify { padding: 0 3px 0 4px; }
.cols-modify { grid-template-columns: 22px 22px 25px 24px 14px 24px 12px; }
.p-layer { padding-right: 4px; }
.cols-layer { grid-template-columns: repeat(7, 28px); grid-auto-rows: 21px; }
.layer-combo {
  display: flex;
  align-items: center;
  height: 22px;
  margin: 1px 6px 0 3px;
  padding-left: 1px;
  border: 1px solid #626262;
}
.layer-combo .swatch { margin: 0 4px 0 3px; }
.layer-combo select { flex: 1; }
.combo-btn {
  display: flex;
  align-items: center;
  justify-content: center;
  width: 14px;
  height: 20px;
  border: 1px solid #585858;
}
.swatch { width: 12px; height: 12px; background: #fff; border: 1px solid #000; }
.p-anno { padding: 0 1px; }
.p-anno .big { width: 46px; }
.cols-anno { grid-template-columns: 20px 18px; }
.p-block .big { width: 48px; }
.p-block .big:last-child { width: 54px; }
.cols-block { grid-template-columns: 18px; }
.mini {
  flex-direction: column;
  justify-content: flex-start;
  padding-top: 7px;
  background: #414141;
}
.mini span { margin: 14px 0 3px; }
.m-prop { width: 37px; }
.m-util { width: 52px; }
.m-clip { width: 40px; }

/* properties palette */
.work { flex: 1; display: flex; gap: 5px; min-height: 0; }
.palette {
  display: flex;
  flex-direction: column;
  width: 230px;
  background: #2e2e2e;
}
.palette-head {
  display: flex;
  align-items: center;
  gap: 7px;
  height: 20px;
  margin-top: 1px;
  padding: 0 5px 0 4px;
  background: #3c3c3e;
  color: #9a9a9a;
}
.palette-head h2 { flex: 1; }
.palette-head .x { color: #777; }
.palette-tools { display: flex; gap: 10px; padding: 5px 10px 4px; }
.pick {
  display: flex;
  width: 131px;
  height: 24px;
  background: #464646;
  border: 2px solid #fff;
  border-top: 2px solid #e0ded8;
}
.pick select { flex: 1; min-width: 0; padding-bottom: 3px; color: #c2c2c2; }
.pick-btn {
  display: flex;
  align-items: center;
  justify-content: center;
  width: 16px;
  background: #d4d0c8;
  border: 1px solid #fff;
  border-right-color: #808080;
  border-bottom-color: #808080;
}
.pick-btn svg { width: 7px; height: 4px; }
.picks { display: flex; height: 22px; background: #383838; }
.picks button { width: 23px; }
.props { display: flex; flex: 1; min-height: 0; padding: 0 11px 0 10px; margin-bottom: 10px; }
.props-list { flex: 1; overflow: hidden; background: #464646; margin-right: 5px; }
.props section { margin-bottom: 3px; }
.group {
  width: 100%;
  height: 21px;
  justify-content: space-between;
  padding: 0 6px 0 4px;
  background: #3b3b3d;
  color: #8f8f8f;
  font-weight: bold;
  font-size: 13px;
}
.group svg { width: 8px; height: 4px; }
.props table { width: 100%; table-layout: fixed; border-collapse: separate; border-spacing: 0; }
.props td, .props th {
  height: 21px;
  padding: 0 0 0 2px;
  border-bottom: 1px solid #343434;
  border-left: 1px solid #343434;
  text-align: left;
  font-weight: normal;
  white-space: nowrap;
  overflow: hidden;
  color: #bcbcbc;
}
.props td { font-family: "Liberation Mono", "Noto Sans CJK SC", monospace; font-size: 10px; }
.props td.cn { font-size: 12px; }
.props td:first-child { width: 20px; border: 0; }
.props th { width: 75px; }
.dots { font-family: "Liberation Mono", monospace; font-size: 10px; }
.val { display: flex; align-items: center; gap: 2px; }
.val .swatch { margin-left: 2px; }
.rule { width: 42px; height: 1px; background: #bcbcbc; margin: 0 1px 0 2px; }
.props-scroll { width: 9px; background: #262626; }
.props-scroll i { display: block; height: 53%; background: #6e6e6e; }

/* drawing */
.doc { flex: 1; display: flex; flex-direction: column; min-width: 0; padding-right: 2px; background: #3a3a3a; }
.doc-tabs { display: flex; height: 23px; padding-top: 2px; background: #3c3c3e; }
.nav { width: 15px; }
.nav svg { width: 6px; height: 8px; }
.nav.right { margin-left: auto; margin-right: 5px; }
.doc-tab {
  display: flex;
  align-items: center;
  gap: 13px;
  padding: 0 3px 0 12px;
  background: #2d2d2d;
  clip-path: polygon(10px 0, calc(100% - 8px) 0, 100% 100%, 0 100%);
}
.doc-tab a { color: #d6d6d6; font-weight: bold; font-size: 11px; text-decoration: none; }
.doc-tab .x { color: #c0c0c0; }
.view {
  flex: 1;
  display: flex;
  flex-direction: column;
  margin: 0 1px 3px 2px;
  border: 2px solid #fff;
  border-left-color: #a0a0a0;
  border-top-color: #d8d8d8;
}
.canvas {
  position: relative;
  flex: 1;
  background: #1f2730;
  border: 1px solid #111;
  border-bottom: 2px solid #fff;
  overflow: hidden;
}
.gridlines { width: 100%; height: 100%; }
.ucs { position: absolute; left: 10px; bottom: 6px; width: 60px; height: 56px; }
.cross { position: absolute; left: 518px; top: 135px; width: 73px; height: 73px; }
.layouts { display: flex; height: 19px; background: #464646; }
.step { width: 16px; }
.step svg { width: 8px; height: 8px; }
.layout { display: grid; margin-left: -5px; align-content: start; color: #b0b0b0; }
.layout svg, .layout span { grid-area: 1 / 1; }
.layout span { padding-right: 6px; }
.layout svg { height: 16px; width: 49px; }
.layout.on { margin-left: 2px; color: #d0d0d0; font-weight: bold; }
.layout.on svg { width: 46px; }
.layout.add svg { width: 29px; }

/* command line */
.command { display: flex; padding: 3px 0 1px; background: #3a3a3a; }
.command-side { display: flex; flex-direction: column; gap: 8px; width: 18px; padding-top: 6px; align-items: center; background: #38383a; }
.command-side .x { color: #777; }
.command-box {
  flex: 1;
  border: 1px solid #8a8a8a;
  border-left-color: #b0b0b0;
  border-right: 2px solid #e8e8e8;
  border-bottom: 2px solid #fff;
  background: #525252;
  font-family: "Liberation Mono", "Noto Sans CJK SC", monospace;
  font-size: 14px;
}
.log { padding: 1px 3px; }
.log p { font-size: 14px; line-height: 18px; }
.entry {
  display: flex;
  align-items: center;
  height: 19px;
  padding: 0 17px 0 3px;
  border-top: 1px solid #808080;
}
.entry input { flex: 1; outline: none; }
.hscroll { display: flex; height: 18px; width: 79px; background: #e8e6e0; }
.hscroll button, .thumb {
  width: 16px;
  background: #d4d0c8;
  border: 1px solid #fff;
  border-right-color: #606060;
  border-bottom-color: #606060;
}
.hscroll svg { width: 4px; height: 8px; }
.track { flex: 1; background: repeating-conic-gradient(#fff 0 25%, #c8c4bc 0 50%) 0 0 / 2px 2px; }

/* status bar */
.status { display: flex; align-items: center; height: 23px; padding-bottom: 2px; background: #464646; color: #b4b4b4; }
.coords { width: 259px; padding-left: 2px; font-size: 11px; }
.cells { display: flex; }
.cells button { width: 22px; height: 18px; border-left: 1px solid #383838; color: #d6d6d6; }
.cells .on { width: 18px; height: 16px; background: #d3dbe3; }
.cells .dot { background: radial-gradient(circle at 14px 3px, #4a78d0 2px, transparent 3px) #d3dbe3; }
.cells .wins { width: 18px; height: 16px; }
.cells .scale { width: 46px; gap: 2px; color: #b4b4b4; font-size: 11px; }
.cells .dim { color: #808080; }
.cells .blue { color: #4f93f5; }
.cells.end { margin-left: auto; }
.brand { padding: 2px 2px 0 3px; border-left: 1px solid #383838; border-right: 1px solid #383838; font-size: 11px; }
.grip { width: 10px; height: 10px; margin: 0 2px 0 4px; align-self: flex-end; }
```
